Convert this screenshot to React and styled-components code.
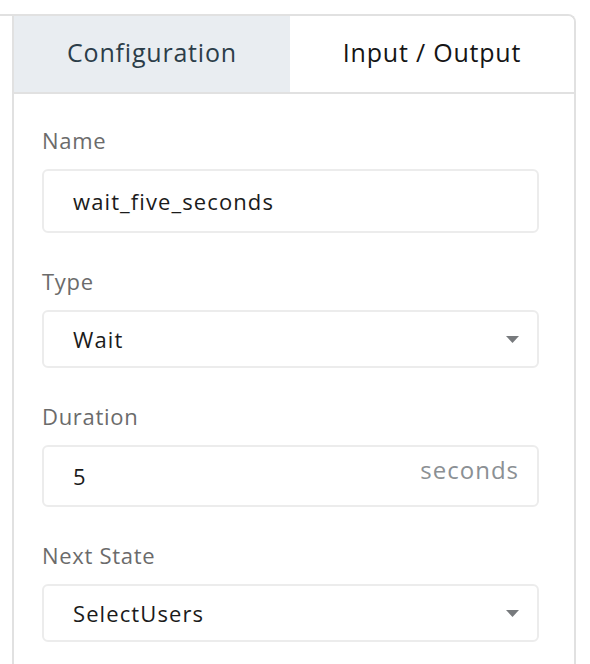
import React from "react";
import styled, { createGlobalStyle } from "styled-components";

const GlobalStyle = createGlobalStyle`
  html, body {
    margin: 0;
    padding: 0;
    background: #ffffff;
  }
  body {
    font-family: "Open Sans", "Liberation Sans", sans-serif;
    -webkit-font-smoothing: antialiased;
  }
`;

const fields = [
  { label: "Name", kind: "text", value: "wait_five_seconds", height: 64 },
  { label: "Type", kind: "select", value: "Wait", height: 58 },
  { label: "Duration", kind: "text", value: "5", unit: "seconds", height: 62 },
  { label: "Next State", kind: "select", value: "SelectUsers", height: 58 },
];

const Caret = () => (
  <svg width="13" height="7" viewBox="0 0 13 7">
    <path d="M0 0 H13 L6.5 7 Z" fill="#777a7d" />
  </svg>
);

const App = () => {
  const [tab, setTab] = React.useState("config");

  return (
    <>
      <GlobalStyle />
      <S.Frame>
        <S.Panel>
          <S.Tabs>
            <S.Tab
              $active={tab === "config"}
              $width="276px"
              onClick={() => setTab("config")}
            >
              Configuration
            </S.Tab>
            <S.Tab $active={tab === "io"} onClick={() => setTab("io")}>
              Input / Output
            </S.Tab>
          </S.Tabs>
          <S.Form>
            {fields.map((f) => (
              <S.Field key={f.label}>
                <S.Label>{f.label}</S.Label>
                <S.Control $height={f.height}>
                  <S.Value>{f.value}</S.Value>
                  {f.unit && <S.Unit>{f.unit}</S.Unit>}
                  {f.kind === "select" && <Caret />}
                </S.Control>
              </S.Field>
            ))}
          </S.Form>
        </S.Panel>
      </S.Frame>
    </>
  );
};

export default App;

const S = {};

S.Frame = styled.div`
  margin-top: 14px;
  width: 576px;
  height: 650px;
  box-sizing: border-box;
  padding-left: 12px;
  border-top: 2px solid #e1e1e1;
  border-right: 2px solid #e1e1e1;
  border-top-right-radius: 8px;
  overflow: hidden;
`;

S.Panel = styled.div`
  height: 100%;
  border-left: 2px solid #e1e1e1;
`;

S.Tabs = styled.div`
  display: flex;
  height: 76px;
  border-bottom: 2px solid #e1e1e1;
`;

S.Tab = styled.div`
  flex: ${(p) => (p.$width ? `0 0 ${p.$width}` : "1")};
  display: flex;
  align-items: center;
  justify-content: center;
  padding-bottom: 4px;
  box-sizing: border-box;
  font-size: 25px;
  letter-spacing: 0.8px;
  color: ${(p) => (p.$active ? "#2c3d49" : "#151515")};
  background: ${(p) => (p.$active ? "#e9edf1" : "#ffffff")};
  cursor: pointer;
`;

S.Form = styled.div`
  padding: 32px 35px 0 28px;
`;

S.Field = styled.div`
  margin-bottom: 34px;
`;

S.Label = styled.div`
  font-size: 22px;
  line-height: 28px;
  letter-spacing: 0.7px;
  color: #6b6b6b;
  margin-bottom: 15px;
`;

S.Control = styled.div`
  display: flex;
  align-items: center;
  box-sizing: border-box;
  height: ${(p) => p.$height}px;
  padding: 0 18px 0 29px;
  border: 2px solid #ececec;
  border-radius: 6px;
  background: #ffffff;
`;

S.Value = styled.div`
  flex: 1;
  font-size: 22px;
  letter-spacing: 1.1px;
  color: #1b1b1b;
`;

S.Unit = styled.div`
  align-self: flex-start;
  margin-top: 6px;
  font-size: 24px;
  letter-spacing: 1px;
  color: #8b9094;
`;
